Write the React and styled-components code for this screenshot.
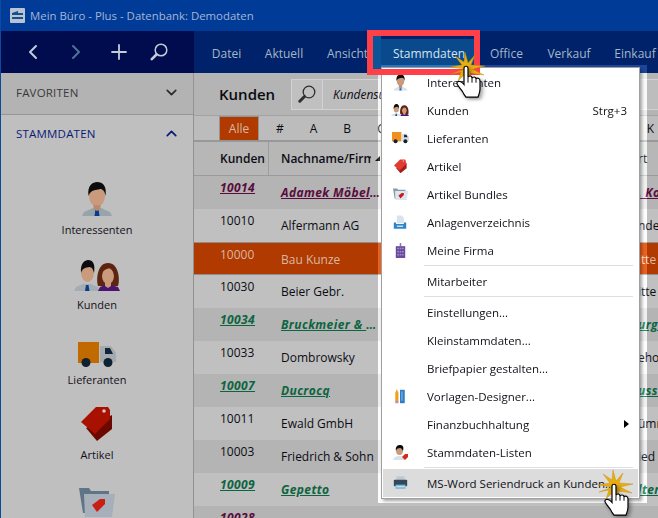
import { styled, createGlobalStyle } from "styled-components";
import { ChevronDown, ChevronUp, ChevronLeft, ChevronRight, Plus } from "lucide-react";

const FONT = `"Open Sans", "Noto Sans", sans-serif`;

const GlobalStyle = createGlobalStyle`
  html, body { margin: 0; padding: 0; background: #b4b4b4; }
  * { box-sizing: border-box; }
`;

const Page = styled.div`
  position: relative;
  width: 658px;
  height: 518px;
  overflow: hidden;
  font-family: ${FONT};
  font-size: 12px;
  color: #0c0c14;
  border-left: 1px solid #0a4aa0;
`;

/* top bars */
const TitleBar = styled.div`
  height: 31px;
  display: flex;
  align-items: center;
  gap: 5px;
  padding-left: 9px;
  background: #003b98;
  color: #a3b6d6;
  font-size: 11.4px;
`;
const NavBar = styled.div`
  height: 42px;
  display: flex;
  background: #00226b;
`;
const NavTools = styled.div`
  width: 193px;
  flex: none;
  display: flex;
  align-items: center;
  gap: 19px;
  padding-left: 20px;
  background: #000c4e;
  color: #c4ccd8;
`;
const MenuBar = styled.div`
  display: flex;
  padding: 8px 0 0 6px;
`;
const MenuTab = styled.div`
  width: ${(p) => p.$w}px;
  flex: none;
  display: flex;
  align-items: center;
  justify-content: center;
  padding-bottom: 6px;
  white-space: nowrap;
  color: ${(p) => (p.$active ? "#d8e2ee" : "#a3b7c6")};
  background: ${(p) => (p.$active ? "#0a4a8c" : "transparent")};
`;

/* body */
const Body = styled.div`
  display: flex;
  height: 445px;
`;
const Sidebar = styled.div`
  width: 193px;
  flex: none;
  background: #bfbfbf;
  border-right: 1px solid #939393;
`;
const SideHead = styled.div`
  height: ${(p) => p.$h}px;
  display: flex;
  align-items: center;
  justify-content: space-between;
  padding: 0 13px 3px 15px;
  font-size: 11.5px;
  letter-spacing: 0.2px;
  color: ${(p) => p.$color};
  background: ${(p) => p.$bg};
  border-bottom: ${(p) => (p.$line ? "1px solid #979797" : "none")};
`;
const SideList = styled.div`
  display: flex;
  flex-direction: column;
  align-items: center;
  padding-top: 24px;
`;
const SideItem = styled.div`
  height: 75px;
  display: flex;
  flex-direction: column;
  align-items: center;
  gap: 5px;
  font-size: 11px;
  color: #14101c;
`;
const SideIcon = styled.div`
  height: 38px;
  display: flex;
  align-items: flex-end;
`;

const Main = styled.div`
  flex: 1;
  min-width: 0;
  background: #b4b4b4;
`;
const TopBar = styled.div`
  height: 42px;
  display: flex;
  align-items: center;
  padding-left: 25px;
  background: #b3b4b3;
`;
const Heading = styled.div`
  width: 72px;
  font-size: 15px;
  font-weight: 600;
  color: #0a0a12;
`;
const SearchBtn = styled.div`
  width: 32px;
  height: 31px;
  display: flex;
  align-items: center;
  justify-content: center;
  background: #c0c0c0;
  border: 1px solid #d2d2d2;
`;
const SearchInput = styled.div`
  flex: 1;
  height: 31px;
  display: flex;
  align-items: center;
  padding-left: 10px;
  font-style: italic;
  background: #bdbdbd;
  border: solid #d2d2d2;
  border-width: 1px 0;
`;
const AlphaBar = styled.div`
  height: 27px;
  display: flex;
  align-items: center;
  padding-left: 25px;
  background: #bcbcbc;
  border-top: 1px solid #a3a3a3;
  border-bottom: 2px solid #989898;
`;
const AllBtn = styled.div`
  width: 40px;
  height: 25px;
  flex: none;
  display: flex;
  align-items: center;
  justify-content: center;
  margin-right: 4px;
  background: #b03a00;
  border: 1px solid #949494;
  color: #d8b8a4;
`;
const Letter = styled.div`
  width: 33.7px;
  flex: none;
  text-align: center;
  color: #0c0c14;
`;
const ColHead = styled.div`
  height: 34px;
  display: flex;
  align-items: center;
  font-weight: 600;
  background: #b6b7b6;
  border-bottom: 1px solid #9a9a9a;
`;
const ColNum = styled.div`
  width: 75px;
  height: 100%;
  display: flex;
  align-items: center;
  padding-left: 26px;
  border-right: 1px solid #9e9e9e;
`;
const ColName = styled.div`
  width: 102px;
  padding-left: 12px;
  white-space: nowrap;
  overflow: hidden;
`;
const SortMark = styled.div`
  width: 0;
  height: 0;
  margin-left: 4px;
  border-left: 5px solid transparent;
  border-bottom: 5px solid #101010;
`;
const ColEnd = styled.div`
  margin-left: auto;
  width: 20px;
  font-weight: 400;
`;
const Row = styled.div`
  height: 33px;
  display: flex;
  background: ${(p) => (p.$selected ? "#b03a00" : p.$odd ? "#b4b4b4" : "#c0c0c0")};
  color: ${(p) => (p.$selected ? "#d8b8a4" : p.$color || "#0c0c14")};
  border-top: ${(p) => (p.$selected ? "1px solid #8e8e8e" : "none")};
  border-bottom: ${(p) => (p.$selected ? "1px solid #8e8e8e" : "none")};
  font-weight: ${(p) => (p.$color ? 700 : 400)};
  font-style: ${(p) => (p.$color ? "italic" : "normal")};
  letter-spacing: ${(p) => (p.$color ? "0.4px" : "0")};
  text-decoration: ${(p) => (p.$color ? "underline" : "none")};
`;
const NumCell = styled.div`
  width: 75px;
  padding: 3px 0 0 26px;
`;
const NameCell = styled.div`
  width: 112px;
  padding: 8px 0 0 12px;
  white-space: nowrap;
  overflow: hidden;
  text-overflow: ellipsis;
`;
const EndCell = styled.div`
  margin-left: auto;
  width: 20px;
  padding-top: 8px;
  white-space: nowrap;
  overflow: hidden;
`;

/* open menu, lies over the page */
const MenuHalo = styled.div`
  position: absolute;
  left: 377px;
  top: 65px;
  width: 269px;
  height: 438px;
  backdrop-filter: brightness(1.32);
  background: rgba(255, 255, 255, 0.12);
`;
const Dropdown = styled.div`
  position: absolute;
  left: 380px;
  top: 67px;
  width: 259px;
  height: 432px;
  padding: 0 1px;
  background: #fff;
  border: 1px solid #a0a0a0;
  box-shadow: 2px 2px 3px rgba(0, 0, 0, 0.35);
  color: #101018;
  font-size: 11.5px;
`;
const DropItem = styled.div`
  position: relative;
  height: 28px;
  display: flex;
  align-items: center;
  padding: 0 9px 0 44px;
  background: ${(p) => (p.$hover ? "#dcdcdc" : "transparent")};
`;
const DropIcon = styled.div`
  position: absolute;
  left: 6px;
  top: 4px;
  width: 22px;
  height: 20px;
  display: flex;
  align-items: center;
  justify-content: center;
`;
const Shortcut = styled.span`
  margin-left: auto;
  padding-right: 2px;
`;
const SubArrow = styled.span`
  margin-left: auto;
  border-left: 5px solid #000;
  border-top: 4px solid transparent;
  border-bottom: 4px solid transparent;
`;
const Divider = styled.div`
  height: 1px;
  margin: 1px 5px 1px 41px;
  background: #dedede;
`;
const Highlight = styled.div`
  position: absolute;
  left: 366px;
  top: 30px;
  width: 113px;
  height: 45px;
  border: 6px solid #ff4048;

  &::before {
    content: "";
    position: absolute;
    left: 0;
    top: 0;
    bottom: 0;
    width: 8px;
    background: #0c5498;
  }
`;
const Pointer = styled.svg`
  position: absolute;
  left: ${(p) => p.$x}px;
  top: ${(p) => p.$y}px;
`;

/* drawings */
const Person = ({ size = 36, shirt = "#97a4ab", tie = "#0b3a8c" }) => (
  <svg width={size} height={size} viewBox="0 0 36 36">
    <path d="M3 35 L5 31 L14 27 H22 L31 31 L33 35 Z" fill={shirt} />
    <path d="M16.5 28 h3 l1 7 h-5 z" fill={tie} />
    <ellipse cx="18" cy="15" rx="8" ry="10.5" fill="#c99b7c" />
    <path d="M14.5 24 h7 v4 l-3.5 2 l-3.5 -2 z" fill="#b98a6c" />
    <path d="M9.5 15 C8 4 14 1 18 1 C24 1 28 5 26.5 15 C25.5 10 24 8 21 8 C17 9.5 12 8 9.5 15 Z" fill="#0c0c0e" />
  </svg>
);
const Couple = ({ size = 46, shirt = "#a3aeb4" }) => (
  <svg width={size} height={(size * 32) / 46} viewBox="0 0 46 32">
    <path d="M0 31 L2 27 L9 24 H17 L24 27 L26 31 Z" fill={shirt} />
    <path d="M12 25 h2.5 l1 6 h-4.5 z" fill="#0b3a8c" />
    <ellipse cx="13.5" cy="13" rx="6.5" ry="9" fill="#c99b7c" />
    <path d="M7 13 C6 3 11 0 14 0 C19 0 21.5 4 20 13 C19 9 18 7 15.5 7 C12 8 9 7 7 13 Z" fill="#0c0c0e" />
    <path d="M24 26 C22 20 23 3 34 3 C45 3 46 20 44 26 Z" fill="#5e2410" />
    <path d="M24 31 L26 27 L31 25 H37 L44 27 L46 31 Z" fill="#4a1470" />
    <ellipse cx="34" cy="16" rx="6" ry="8" fill="#c99b7c" />
    <path d="M31 23 h6 v3 l-3 2 l-3 -2 z" fill="#c99b7c" />
    <path d="M28 16 C28 10 32 9 36 8 C38 10 40 12 40 16 L41 9 L34 6 L28 9 Z" fill="#5e2410" />
  </svg>
);
const Truck = ({ size = 38, cargo = "#c06a00", cab = "#a3aab0" }) => (
  <svg width={size} height={(size * 25) / 38} viewBox="0 0 38 25">
    <rect x="0" y="0" width="21" height="21" fill={cargo} />
    <path d="M22 4 H33 L38 11 V20 H22 Z" fill={cab} />
    <path d="M27 6 H32 L35 12 H27 Z" fill="#122436" />
    <circle cx="8" cy="20.5" r="4.5" fill="#0f2232" />
    <circle cx="30" cy="20.5" r="4.5" fill="#0f2232" />
  </svg>
);
const Tag = ({ size = 32, top = "#a81000", bottom = "#6c0800" }) => (
  <svg width={size} height={(size * 36) / 32} viewBox="0 0 32 36">
    <path d="M5 22 L31 9 V23 L16 35 Z" fill={bottom} />
    <path d="M0 16 L15 1 H27 L29 4 V13 L14 28 Z" fill={top} />
    <circle cx="23" cy="5" r="1.8" fill="#d8c4c0" />
  </svg>
);
const Folder = ({ size = 36, back = "#5f7486", front = "#a7afbb" }) => (
  <svg width={size} height={(size * 30) / 36} viewBox="0 0 36 30">
    <path d="M0 1 H10 L12 4 H30 V26 H4 Z" fill={back} />
    <path d="M5 7 H36 L33 30 H6 Z" fill={front} />
    <path d="M13 18 L21 12 H26 V17 L18 25 Z" fill="#c81e14" />
  </svg>
);
const Archive = () => (
  <svg width="14" height="15" viewBox="0 0 18 18">
    <path d="M5 0 H11 L14 3 V10 H5 Z" fill="#d6e4f0" />
    <path d="M1 9 H4 V11 H14 V9 H17 V17 H1 Z" fill="#2f86c4" />
    <rect x="5" y="13" width="8" height="1.5" fill="#e8f2fa" />
  </svg>
);
const Building = () => (
  <svg width="11" height="15" viewBox="0 0 14 19">
    <rect x="6" y="0" width="2" height="4" fill="#8a7aa8" />
    <rect x="1" y="4" width="12" height="15" fill="#6a4a9c" />
    <path d="M3 6 h2 v2 h-2 z M6 6 h2 v2 h-2 z M9 6 h2 v2 h-2 z M3 10 h2 v2 h-2 z M6 10 h2 v2 h-2 z M9 10 h2 v2 h-2 z M3 14 h2 v2 h-2 z M6 14 h2 v2 h-2 z M9 14 h2 v2 h-2 z" fill="#a48ec8" />
  </svg>
);
const Pencils = () => (
  <svg width="12" height="15" viewBox="0 0 14 19">
    <path d="M1 5 L3 0 L5 5 V16 H1 Z" fill="#f0a020" />
    <rect x="1" y="15" width="4" height="3" fill="#b890b8" />
    <rect x="7" y="1" width="6" height="17" fill="#2c7cc8" />
    <rect x="9" y="3" width="1" height="12" fill="#a8d0f0" />
  </svg>
);
const Printer = () => (
  <svg width="15" height="14" viewBox="0 0 18 16">
    <rect x="4" y="0" width="10" height="5" fill="#c0c8cf" />
    <rect x="1" y="4" width="16" height="8" rx="1" fill="#33495a" />
    <rect x="3" y="10" width="12" height="5" fill="#7eb8d8" />
    <rect x="4" y="12" width="10" height="1" fill="#e8f0f4" />
  </svg>
);
const ListPerson = () => (
  <svg width="17" height="17" viewBox="0 0 17 17">
    <path d="M1 16 L3 13 L6 12 H9 L12 13 L13 16 Z" fill="#d8e2ea" />
    <ellipse cx="7.5" cy="6.5" rx="3.5" ry="4.5" fill="#c99b7c" />
    <path d="M4 7 C3 2 6 1 8 1 C11 1 12 3 11 7 C10 5 9 4 8 4 C6 4.5 5 4 4 7 Z" fill="#0c0c0e" />
    <path d="M10 13 L13 10 H16 V13 L13 16 Z" fill="#d8281c" />
  </svg>
);
const LensGlyph = ({ size, color, ring = 1.5, handle = 2.6 }) => (
  <svg width={size} height={size} viewBox="0 0 18 18">
    <circle cx="11" cy="7" r="5.8" fill="none" stroke={color} strokeWidth={ring} />
    <path d="M6.5 11.5 L1.8 16.2" stroke={color} strokeWidth={handle} strokeLinecap="round" />
  </svg>
);
const Hand = ({ x, y }) => (
  <Pointer $x={x} $y={y} width="46" height="56" viewBox="0 0 46 56">
    <path
      d="M15 17 L0 15 L12 13 L5 4 L14 10 L15 0 L18 11 L25 3 L21 13 L35 14 L22 17 L34 23 L20 21 L22 31 L15 22 L8 29 L11 20 L1 22 Z"
      fill="#e8ae10"
      stroke="#c08a08"
      strokeWidth="0.4"
    />
    <g transform="translate(0 1) scale(1 0.9)" style={{ filter: "drop-shadow(2px 2px 2px rgba(0,0,0,.4))" }}>
      <path
        d="M14 46 C12 40 6 36 7 33 C8 30 12 32 14 35 V17 C14 14 18 14 18 17 V27 C19 25 22 25 22 28 C23 26 26 26 26 29 C27 27 30 28 30 31 V40 C30 44 29 46 28 49 H16 Z"
        fill="#fff"
        stroke="#000"
        strokeWidth="1.2"
      />
      <path d="M18 27 V33 M22 28 V33 M26 29 V33" stroke="#000" strokeWidth="1" />
    </g>
  </Pointer>
);

const tabs = [
  ["Datei", 53],
  ["Aktuell", 62],
  ["Ansicht", 65],
  ["Stammdaten", 98, true],
  ["Office", 57],
  ["Verkauf", 68],
  ["Einkauf", 64],
];
const letters = ["#", "A", "B", "C", "D", "E", "F", "G", "H", "I", "J", "K"];
const PURPLE = "#5a0c3c";
const GREEN = "#0c6440";
const rows = [
  ["10014", "Adamek Möbelhaus", ". Ko", PURPLE],
  ["10010", "Alfermann AG", "nde"],
  ["10000", "Bau Kunze", "itte", null, true],
  ["10030", "Beier Gebr.", "itte"],
  ["10034", "Bruckmeier & Sohn", "urg", GREEN],
  ["10033", "Dombrowsky", "eho"],
  ["10007", "Ducrocq", "ussi", GREEN],
  ["10011", "Ewald GmbH", "ümr"],
  ["10003", "Friedrich & Sohn", "ied"],
  ["10009", "Gepetto", "lter", GREEN],
  ["10028", "", "", PURPLE],
];

export default function App() {
  return (
    <Page>
      <GlobalStyle />
      <TitleBar>
        <svg width="15" height="15" viewBox="0 0 15 15">
          <rect width="15" height="15" rx="1" fill="#b9c4d2" />
          <path d="M2 5 L8 3 V5 H13 V7 H2 Z M2 9 H13 V11 H2 Z" fill="#1a4c90" />
        </svg>
        <span>Mein Büro - Plus - Datenbank: Demodaten</span>
      </TitleBar>
      <NavBar>
        <NavTools>
          <ChevronLeft size={24} strokeWidth={2} />
          <ChevronRight size={24} strokeWidth={2} color="#4f7394" />
          <Plus size={24} strokeWidth={1.8} />
          <LensGlyph size={18} color="#c4ccd8" />
        </NavTools>
        <MenuBar>
          {tabs.map(([label, width, active]) => (
            <MenuTab key={label} $w={width} $active={active}>
              {label}
            </MenuTab>
          ))}
        </MenuBar>
      </NavBar>
      <Body>
        <Sidebar>
          <SideHead $h={42} $bg="#b2b3b2" $color="#3a3a3e" $line>
            FAVORITEN
            <ChevronDown size={17} strokeWidth={2.4} color="#2c2c30" />
          </SideHead>
          <SideHead $h={40} $bg="#bfbfbf" $color="#0a1a78">
            STAMMDATEN
            <ChevronUp size={17} strokeWidth={2.4} color="#0a1a78" />
          </SideHead>
          <SideList>
            <SideItem>
              <SideIcon>
                <Person size={36} />
              </SideIcon>
              Interessenten
            </SideItem>
            <SideItem>
              <SideIcon>
                <Couple size={46} />
              </SideIcon>
              Kunden
            </SideItem>
            <SideItem>
              <SideIcon>
                <Truck size={38} />
              </SideIcon>
              Lieferanten
            </SideItem>
            <SideItem>
              <SideIcon>
                <Tag size={32} />
              </SideIcon>
              Artikel
            </SideItem>
            <SideItem>
              <SideIcon>
                <Folder size={36} />
              </SideIcon>
            </SideItem>
          </SideList>
        </Sidebar>
        <Main>
          <TopBar>
            <Heading>Kunden</Heading>
            <SearchBtn>
              <LensGlyph size={18} color="#2e2e2e" ring={1.3} handle={3} />
            </SearchBtn>
            <SearchInput>Kundensuche</SearchInput>
          </TopBar>
          <AlphaBar>
            <AllBtn>Alle</AllBtn>
            {letters.map((l) => (
              <Letter key={l}>{l}</Letter>
            ))}
          </AlphaBar>
          <ColHead>
            <ColNum>Kunden</ColNum>
            <ColName>Nachname/Firma</ColName>
            <SortMark />
            <ColEnd>rt</ColEnd>
          </ColHead>
          {rows.map(([num, name, end, color, selected], i) => (
            <Row key={num} $odd={i % 2 === 0} $color={color} $selected={selected}>
              <NumCell>{num}</NumCell>
              <NameCell>{name}</NameCell>
              <EndCell>{end}</EndCell>
            </Row>
          ))}
        </Main>
      </Body>

      <MenuHalo />
      <Dropdown>
        <DropItem>
          <DropIcon>
            <Person size={17} shirt="#d8e2ea" tie="#2f72b8" />
          </DropIcon>
          Interessenten
        </DropItem>
        <DropItem>
          <DropIcon>
            <Couple size={18} shirt="#d8e2ea" />
          </DropIcon>
          Kunden<Shortcut>Strg+3</Shortcut>
        </DropItem>
        <DropItem>
          <DropIcon>
            <Truck size={17} cargo="#f09020" cab="#d8dde2" />
          </DropIcon>
          Lieferanten
        </DropItem>
        <DropItem>
          <DropIcon>
            <Tag size={13} top="#e03c30" bottom="#a81c14" />
          </DropIcon>
          Artikel
        </DropItem>
        <DropItem>
          <DropIcon>
            <Folder size={15} back="#8a9aa6" front="#dbe6ee" />
          </DropIcon>
          Artikel Bundles
        </DropItem>
        <DropItem>
          <DropIcon>
            <Archive />
          </DropIcon>
          Anlagenverzeichnis
        </DropItem>
        <DropItem>
          <DropIcon>
            <Building />
          </DropIcon>
          Meine Firma
        </DropItem>
        <Divider />
        <DropItem>Mitarbeiter</DropItem>
        <Divider />
        <DropItem>Einstellungen...</DropItem>
        <DropItem>Kleinstammdaten...</DropItem>
        <DropItem>Briefpapier gestalten...</DropItem>
        <DropItem>
          <DropIcon>
            <Pencils />
          </DropIcon>
          Vorlagen-Designer...
        </DropItem>
        <DropItem>
          Finanzbuchhaltung<SubArrow />
        </DropItem>
        <DropItem>
          <DropIcon>
            <ListPerson />
          </DropIcon>
          Stammdaten-Listen
        </DropItem>
        <Divider />
        <DropItem $hover>
          <DropIcon>
            <Printer />
          </DropIcon>
          MS-Word Seriendruck an Kunden...
        </DropItem>
      </Dropdown>
      <Highlight />
      <Hand x={449} y={52} />
      <Hand x={597} y={470} />
    </Page>
  );
}
